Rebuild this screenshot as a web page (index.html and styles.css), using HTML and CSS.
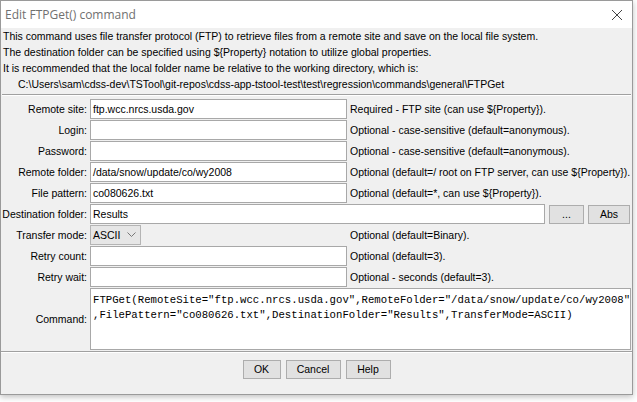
FILE: index.html
```html
<!DOCTYPE html>
<html>
<head>
<meta charset="utf-8">
<title>Edit FTPGet() command</title>
<link rel="stylesheet" href="styles.css">
</head>
<body>
<div class="window">
  <div class="titlebar">
    <span class="title">Edit FTPGet() command</span>
    <svg class="close" width="12" height="12" viewBox="0 0 12 12"><path d="M1 1 L11 11 M11 1 L1 11" stroke="#444" stroke-width="1" fill="none"/></svg>
  </div>
  <div class="content">
    <div class="intro">
      <div>This command uses file transfer protocol (FTP) to retrieve files from a remote site and save on the local file system.</div>
      <div>The destination folder can be specified using ${Property} notation to utilize global properties.</div>
      <div>It is recommended that the local folder name be relative to the working directory, which is:</div>
      <div class="indent">C:\Users\sam\cdss-dev\TSTool\git-repos\cdss-app-tstool-test\test\regression\commands\general\FTPGet</div>
    </div>
    <div class="sep"></div>
    <div class="form">
      <div class="lbl">Remote site:</div>
      <div class="field">ftp.wcc.nrcs.usda.gov</div>
      <div class="note">Required - FTP site (can use ${Property}).</div>

      <div class="lbl">Login:</div>
      <div class="field"></div>
      <div class="note">Optional - case-sensitive (default=anonymous).</div>

      <div class="lbl">Password:</div>
      <div class="field"></div>
      <div class="note">Optional - case-sensitive (default=anonymous).</div>

      <div class="lbl">Remote folder:</div>
      <div class="field">/data/snow/update/co/wy2008</div>
      <div class="note">Optional (default=/ root on FTP server, can use ${Property}).</div>

      <div class="lbl">File pattern:</div>
      <div class="field">co080626.txt</div>
      <div class="note">Optional (default=*, can use ${Property}).</div>

      <div class="lbl tall">Destination folder:</div>
      <div class="destrow">
        <div class="field grow">Results</div>
        <div class="btn dots">...</div>
        <div class="btn abs">Abs</div>
      </div>

      <div class="lbl tall">Transfer mode:</div>
      <div class="selcell"><div class="select"><span>ASCII</span><svg width="9" height="6" viewBox="0 0 9 6"><path d="M0.5 0.5 L4.5 4.5 L8.5 0.5" stroke="#777" fill="none"/></svg></div></div>
      <div class="note">Optional (default=Binary).</div>

      <div class="lbl">Retry count:</div>
      <div class="field"></div>
      <div class="note">Optional (default=3).</div>

      <div class="lbl">Retry wait:</div>
      <div class="field"></div>
      <div class="note">Optional - seconds (default=3).</div>

      <div class="lbl cmdlbl">Command:</div>
      <div class="command">FTPGet(RemoteSite="ftp.wcc.nrcs.usda.gov",RemoteFolder="/data/snow/update/co/wy2008"
,FilePattern="co080626.txt",DestinationFolder="Results",TransferMode=ASCII)</div>
    </div>
    <div class="sep bottom"></div>
    <div class="buttons">
      <div class="btn ok">OK</div>
      <div class="btn cancel">Cancel</div>
      <div class="btn help">Help</div>
    </div>
  </div>
</div>
</body>
</html>
```
FILE: styles.css
```css
html, body {
  margin: 0;
  padding: 0;
  background: #ffffff;
}
body {
  width: 637px;
  height: 402px;
  overflow: hidden;
  font-family: "Liberation Sans", Arial, sans-serif;
  font-size: 10.5px;
  color: #000;
}
.window {
  width: 631px;
  height: 393px;
  border: 1px solid #9a9a9a;
  background: #f0f0f0;
  box-shadow: 0 2px 6px rgba(0,0,0,0.25);
  display: flex;
  flex-direction: column;
}
.titlebar {
  height: 27px;
  background: #ffffff;
  display: flex;
  align-items: center;
  justify-content: space-between;
  padding: 0 6px 0 4px;
}
.title {
  font-family: "Open Sans", "Noto Sans", sans-serif;
  font-size: 12px;
  color: #707070;
}
.close {
  margin-right: 3px;
}
.content {
  flex: 1;
  display: flex;
  flex-direction: column;
}
.intro {
  padding-left: 2px;
  line-height: 16px;
  white-space: nowrap;
}
.intro .indent {
  padding-left: 15px;
}
.sep {
  height: 0;
  border-top: 1px solid #a0a0a0;
  border-bottom: 1px solid #ffffff;
  margin: 2px 1px 3px 1px;
}
.sep.bottom {
  margin: 1px 0 7px 0;
}
.form {
  display: grid;
  grid-template-columns: 89px 257px minmax(0, 1fr);
  grid-auto-rows: 20px;
  row-gap: 1px;
  align-items: center;
}
.lbl {
  text-align: right;
  padding-right: 3px;
  white-space: nowrap;
}
.field {
  height: 18px;
  border: 1px solid #a8a8a8;
  background: #ffffff;
  line-height: 18px;
  padding-left: 2px;
  white-space: nowrap;
  overflow: hidden;
}
.note {
  padding-left: 3px;
  white-space: nowrap;
}
.form .tall {
  height: 22px;
  line-height: 22px;
}
.destrow {
  grid-column: 2 / 4;
  display: flex;
  align-items: center;
  gap: 4px;
  padding-right: 2px;
  height: 22px;
  min-width: 0;
}
.destrow .grow {
  flex: 1;
  min-width: 0;
}
.btn {
  height: 17px;
  line-height: 17px;
  border: 1px solid #adadad;
  background: #e1e1e1;
  text-align: center;
  flex: none;
}
.dots { width: 33px; }
.abs { width: 40px; }
.selcell {
  height: 22px;
  display: flex;
  align-items: center;
}
.select {
  height: 18px;
  border: 1px solid #b4b4b4;
  background: #e6e6e6;
  display: flex;
  align-items: center;
  justify-content: space-between;
  padding: 0 4px 0 2px;
  width: 43px;
}
.cmdlbl {
  grid-row: span 3;
}
.command {
  grid-column: 2 / 4;
  grid-row: span 3;
  align-self: stretch;
  margin-right: 1px;
  border: 1px solid #a8a8a8;
  background: #ffffff;
  font-family: "Liberation Mono", "Courier New", monospace;
  font-size: 10.667px;
  line-height: 15px;
  padding: 4px 0 0 2px;
  white-space: pre;
  overflow: hidden;
}
.buttons {
  display: flex;
  justify-content: center;
  gap: 5px;
}
.ok { width: 36px; }
.cancel { width: 53px; }
.help { width: 43px; }
```
